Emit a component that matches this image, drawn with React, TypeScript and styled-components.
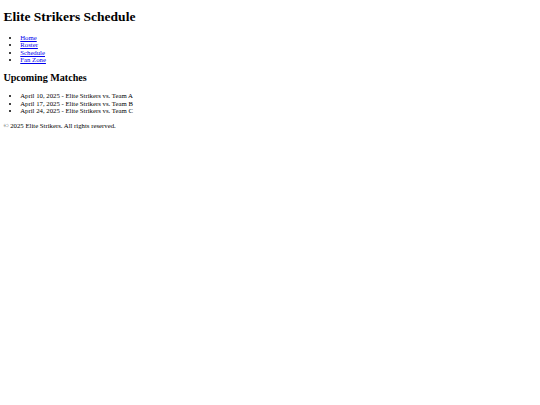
import React from "react";
import styled, { createGlobalStyle } from "styled-components";

// the reference is a default-styled page shrunk from 1280px wide down to 540px,
// so every default size is multiplied by the same factor
const S = 540 / 1280;
const px = (n: number) => `${n * S}px`;

const GlobalStyle = createGlobalStyle`
    html, body {
        background: #ffffff;
    }
    body {
        /* the h1 margin takes the place of the body's top margin */
        margin: 0 ${px(8)} ${px(8)};
        font-family: "Liberation Serif", "Times New Roman", serif;
        font-size: ${px(16)};
        line-height: ${px(18)};
        color: #000000;
    }
`;

const Title = styled.h1`
    font-size: ${px(32)};
    line-height: ${px(37)};
    font-weight: bold;
    margin: ${px(21.44)} 0;
`;

const SectionTitle = styled.h2`
    font-size: ${px(24)};
    line-height: ${px(27)};
    font-weight: bold;
    margin: ${px(19.92)} 0;
`;

const List = styled.ul`
    list-style: disc;
    margin: ${px(16)} 0;
    padding-left: ${px(40)};
`;

const NavLink = styled.a`
    color: #0000ee;
    text-decoration: underline;
`;

const Footer = styled.footer`
    p {
        margin: ${px(16)} 0;
    }
`;

const links = ["Home", "Roster", "Schedule", "Fan Zone"];

const matches = [
    { date: "April 10, 2025", opponent: "Team A" },
    { date: "April 17, 2025", opponent: "Team B" },
    { date: "April 24, 2025", opponent: "Team C" },
];

const App = (): JSX.Element => {
    return (
        <>
            <GlobalStyle />
            <header>
                <Title>Elite Strikers Schedule</Title>
            </header>
            <nav>
                <List>
                    {links.map((l) => (
                        <li key={l}>
                            <NavLink href="#">{l}</NavLink>
                        </li>
                    ))}
                </List>
            </nav>
            <main>
                <section>
                    <SectionTitle>Upcoming Matches</SectionTitle>
                    <List>
                        {matches.map((m) => (
                            <li key={m.date}>
                                {m.date} - Elite Strikers vs. {m.opponent}
                            </li>
                        ))}
                    </List>
                </section>
            </main>
            <Footer>
                <p>© 2025 Elite Strikers. All rights reserved.</p>
            </Footer>
        </>
    );
};

export default App;
